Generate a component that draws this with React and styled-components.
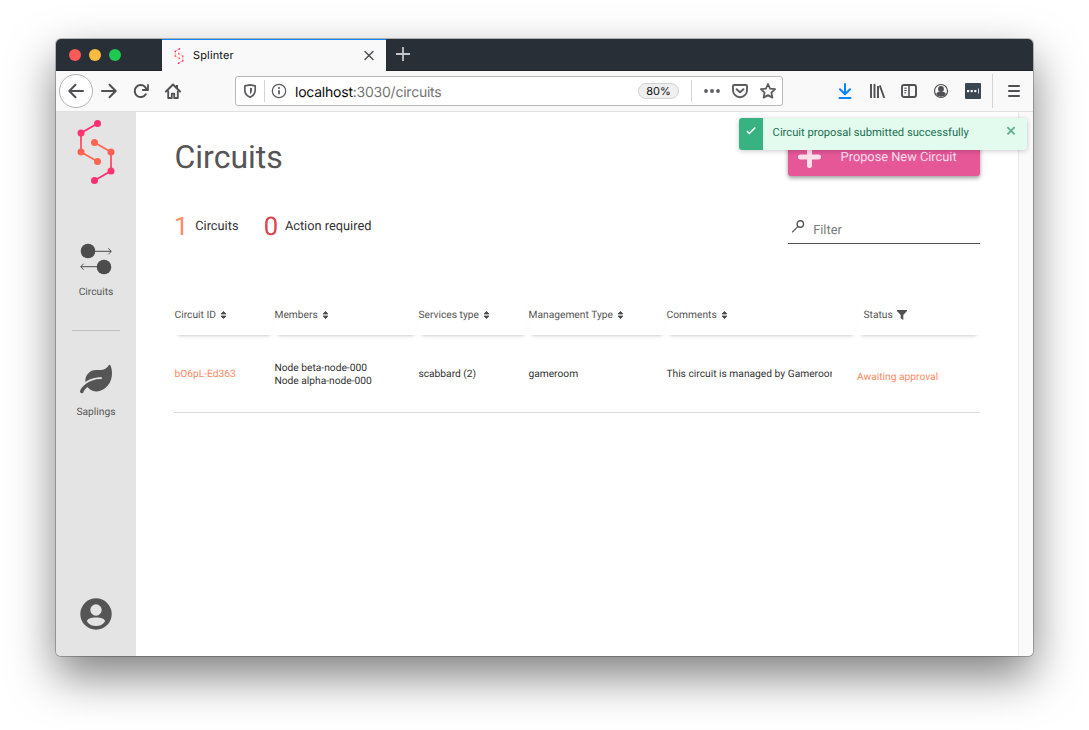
import React from 'react';
import styled, { createGlobalStyle } from 'styled-components';

const Global = createGlobalStyle`
  * { box-sizing: border-box; }
  body { margin: 0; background: #fff; overflow: hidden; text-rendering: geometricPrecision; }
  svg { display: block; flex: none; overflow: visible; }
`;

const Desktop = styled.div`
  width: 1089px;
  height: 730px;
  padding: 39px 56px 74px;
  background: #fff;
  overflow: hidden;
`;

const Window = styled.div`
  display: flex;
  flex-direction: column;
  width: 977px;
  height: 617px;
  border-radius: 5px;
  overflow: hidden;
  background: #fff;
  box-shadow: 0 0 0 1px rgba(0, 0, 0, 0.24), 0 20px 46px rgba(0, 0, 0, 0.5);
  font-family: Roboto, sans-serif;
`;

const TabStrip = styled.div`
  display: flex;
  height: 32px;
  background: #282f37;
  border-bottom: 1px solid #1c2228;
  flex: none;
`;

const Lights = styled.div`
  display: flex;
  gap: 8px;
  width: 106px;
  padding: 10px 0 0 13px;
`;

const Light = styled.span`
  width: 12px;
  height: 12px;
  border-radius: 50%;
  background: ${(p) => p.$color};
`;

const Tab = styled.div`
  display: flex;
  align-items: center;
  width: 224px;
  height: 32px;
  padding: 0 11px 0 12px;
  background: #f9f9fa;
  border-top: 1px solid #0a84ff;
`;

const TabTitle = styled.span`
  flex: 1;
  margin: -1px 0 0 9px;
  font: 400 11px/16px Inter, sans-serif;
  letter-spacing: 0.15px;
  color: #0c0c0d;
`;

const NewTab = styled.div`
  padding: 8px 0 0 10px;
`;

const Toolbar = styled.div`
  display: flex;
  align-items: center;
  height: 41px;
  flex: none;
  padding-left: 3px;
  background: #f9f9fa;
  border-bottom: 1px solid #e0e0e1;
`;

const BackButton = styled.div`
  display: flex;
  align-items: center;
  justify-content: center;
  width: 34px;
  height: 34px;
  border: 1px solid #b4b4b5;
  border-radius: 50%;
  background: #fff;
`;

const NavIcons = styled.div`
  display: flex;
  gap: 16px;
  margin-left: 8px;
  width: 134px;
`;

const UrlBar = styled.div`
  display: flex;
  align-items: center;
  width: 548px;
  height: 30px;
  padding: 0 6px 0 6px;
  border: 1px solid #b9b9ba;
  border-radius: 3px;
  background: #fff;
`;

const Divider = styled.span`
  width: 1px;
  height: ${(p) => p.$height}px;
  margin: 0 ${(p) => p.$right}px 0 ${(p) => p.$left}px;
  background: #d4d4d5;
`;

const Url = styled.span`
  flex: 1;
  margin: 3px 0 0 8px;
  font: 400 14px/20px Inter, sans-serif;
  letter-spacing: -0.23px;
  color: #0c0c0d;
`;

const UrlRest = styled.span`
  color: #737374;
`;

const Zoom = styled.span`
  width: 41px;
  height: 16px;
  border: 1px solid #d2d2d3;
  border-radius: 8px;
  background: #efeff0;
  font: 400 11px/14px Inter, sans-serif;
  color: #0c0c0d;
  text-align: center;
`;

const UrlActions = styled.div`
  display: flex;
  gap: 12px;
`;

const ToolIcons = styled.div`
  display: flex;
  gap: 16px;
  margin-left: 54px;
`;

const Page = styled.div`
  position: relative;
  display: flex;
  flex: 1;
  min-height: 0;
`;

const Sidebar = styled.nav`
  display: flex;
  flex-direction: column;
  align-items: center;
  width: 80px;
  padding: 8px 0 26px;
  background: #e4e4e4;
`;

const NavItem = styled.div`
  display: flex;
  flex-direction: column;
  align-items: center;
  margin-top: ${(p) => p.$top}px;
`;

const NavLabel = styled.span`
  margin-top: 10px;
  font-size: 10.24px;
  line-height: 14px;
  color: #555;
`;

const NavRule = styled.div`
  width: 48px;
  height: 1px;
  margin-top: 31px;
  background: #bfbfbf;
`;

const Spacer = styled.div`
  flex: 1;
`;

const Main = styled.main`
  flex: 1;
  padding: 24px 38px 0 38px;
`;

const Scrollbar = styled.div`
  width: 15px;
  background: #fafafa;
  border-left: 1px solid #e8e8e8;
`;

const TitleRow = styled.div`
  display: flex;
  justify-content: space-between;
  height: 41px;
`;

const Title = styled.h1`
  margin: 0;
  padding-left: 0.5px;
  font-weight: 400;
  font-size: 32px;
  line-height: 42px;
  color: #555;
`;

const ProposeButton = styled.div`
  display: flex;
  align-items: center;
  width: 192px;
  height: 38px;
  margin-top: 2px;
  padding-left: 10px;
  border-radius: 3px;
  background: #e65798;
  box-shadow: 0 2px 4px rgba(0, 0, 0, 0.4);
  color: #fbdfeb;
  font-size: 12.8px;
`;

const ProposeLabel = styled.span`
  margin: 1px 0 0 19.600px;
`;

const StatsRow = styled.div`
  display: flex;
  align-items: flex-end;
  justify-content: space-between;
  height: 67px;
`;

const Stats = styled.div`
  display: flex;
  align-items: center;
  height: 36px;
  padding-top: 2px;
`;

const StatCount = styled.span`
  margin-right: 6.800px;
  font-size: 25.6px;
  line-height: 36px;
  color: ${(p) => p.$color};
`;

const StatLabel = styled.span`
  margin: -1px 25.200px 0 0;
  font-size: 12.8px;
  color: #333;
`;

const Filter = styled.div`
  display: flex;
  width: 192px;
  height: 30px;
  padding: 6px 0 0 4px;
  border-bottom: 1px solid #555;
`;

const FilterText = styled.span`
  margin: 2px 0 0 9.200px;
  font-size: 12.8px;
  line-height: 18px;
  color: #7b7b7b;
`;

const Table = styled.div`
  margin-top: 50px;
`;

const columns = '100px 144px 110px 138px 191px 123px';

const HeadRow = styled.div`
  display: grid;
  grid-template-columns: ${columns};
  height: 41px;
`;

const HeadCell = styled.div`
  display: flex;
  align-items: center;
  gap: 4px;
  padding-left: ${(p) => p.$indent || 0.5}px;
  font-size: 10.24px;
  color: #555;
  box-shadow: 0 4px 4px -4px rgba(0, 0, 0, 0.3);
`;

const BodyRow = styled.div`
  display: grid;
  grid-template-columns: ${columns};
  align-items: center;
  height: 78px;
  border-bottom: 1px solid #dadada;
`;

const Cell = styled.div`
  padding: ${(p) => p.$drop || 0}px 0 0 ${(p) => (p.$drop ? 0 : 0.4)}px;
  font-size: 10.24px;
  line-height: 13px;
  color: ${(p) => p.$color || '#333'};
  white-space: nowrap;
  overflow: hidden;
  width: ${(p) => (p.$width ? `${p.$width}px` : 'auto')};
`;

const Toast = styled.div`
  position: absolute;
  top: 6px;
  right: 6px;
  display: flex;
  align-items: center;
  width: 288px;
  height: 32px;
  padding-right: 11px;
  border-radius: 3px;
  overflow: hidden;
  background: #e3fbef;
  box-shadow: 0 1px 5px rgba(0, 0, 0, 0.22);
  color: #1a7050;
`;

const ToastMark = styled.div`
  display: flex;
  width: 24px;
  height: 32px;
  padding: 8px 0 0 7px;
  background: #38b280;
`;

const ToastText = styled.span`
  flex: 1;
  margin: -4px 0 0 9.600px;
  font-size: 11.2px;
`;

const Icon = ({ size = 16, children, ...rest }) => (
  <svg
    width={size}
    height={size}
    viewBox={`0 0 ${size} ${size}`}
    fill="none"
    stroke="#505054"
    strokeWidth="2"
    strokeLinecap="round"
    strokeLinejoin="round"
    {...rest}
  >
    {children}
  </svg>
);

const Logo = ({ w, h, id }) => (
  <svg width={w} height={h} viewBox="0 0 38 64">
    <defs>
      <linearGradient id={`${id}a`} gradientUnits="userSpaceOnUse" x1="0" y1="10" x2="0" y2="34">
        <stop offset="0" stopColor="#ff2d74" />
        <stop offset="1" stopColor="#ff6651" />
      </linearGradient>
      <linearGradient id={`${id}b`} gradientUnits="userSpaceOnUse" x1="0" y1="30" x2="0" y2="54">
        <stop offset="0" stopColor="#ff6651" />
        <stop offset="1" stopColor="#ff2d74" />
      </linearGradient>
    </defs>
    <g fill="none" strokeWidth="1.8">
      <path d="M20.500 3.500 4 13V32L20.500 41.500" stroke={`url(#${id}a)`} />
      <path d="M17.500 22.500 34 32V51L17.500 60.500" stroke={`url(#${id}b)`} />
    </g>
    <g fill={`url(#${id}a)`}>
      <circle cx="20.500" cy="3.500" r="3.500" />
      <circle cx="4" cy="13" r="3.500" />
      <circle cx="4" cy="32" r="3.500" />
      <circle cx="20.500" cy="41.500" r="3.500" />
    </g>
    <g fill={`url(#${id}b)`}>
      <circle cx="17.500" cy="22.500" r="3.500" />
      <circle cx="34" cy="32" r="3.500" />
      <circle cx="34" cy="51" r="3.500" />
      <circle cx="17.500" cy="60.500" r="3.500" />
    </g>
  </svg>
);

const SortIcon = () => (
  <svg width="7" height="8" viewBox="0 0 7 8" fill="#505050">
    <path d="M3.500.5 5.900 2.900H1.100zM3.500 7.500 1.100 5.100H5.900z" stroke="#505050" strokeLinejoin="round" />
  </svg>
);

const headings = ['Circuit ID', 'Members', 'Services type', 'Management Type', 'Comments'];

export default function App() {
  return (
    <Desktop>
      <Global />
      <Window>
        <TabStrip>
          <Lights>
            <Light $color="#ff5a57" />
            <Light $color="#fdbb40" />
            <Light $color="#1fc94f" />
          </Lights>
          <Tab>
            <Logo w={10} h={16} id="fav" />
            <TabTitle>Splinter</TabTitle>
            <Icon size={12} strokeWidth="1.5">
              <path d="M2 1.500l8 8M10 1.500l-8 8" />
            </Icon>
          </Tab>
          <NewTab>
            <Icon size={14} stroke="#c3c5c7" strokeWidth="1.8" strokeLinecap="butt">
              <path d="M7 0v14M0 7h14" />
            </Icon>
          </NewTab>
        </TabStrip>
        <Toolbar>
          <BackButton>
            <Icon>
              <path d="M15 8H1.500M7.500 1.800 1.300 8l6.200 6.200" />
            </Icon>
          </BackButton>
          <NavIcons>
            <Icon>
              <path d="M1 8h13.500M8.500 1.800 14.700 8l-6.200 6.200" />
            </Icon>
            <Icon>
              <path d="M12.800 11.300A6 6 0 1 1 11.700 3.600L14 6.300" />
              <path d="M15 2V7H9.800" strokeWidth="1.800" />
            </Icon>
            <Icon strokeLinecap="butt">
              <path d="M1 8.500 8 1.500l7 7" strokeLinecap="round" />
              <path d="M3.200 7.500V15h3.600v-4.300h2.400V15h3.600V7.500" strokeWidth="1.800" />
              <path d="M12 2v3" />
            </Icon>
          </NavIcons>
          <UrlBar>
            <Icon stroke="#5c5c61" strokeWidth="1.700">
              <path d="M8 1.800 13.200 2.800V7c0 3.800-1.800 5.800-5.200 7.200C4.600 12.800 2.800 10.800 2.800 7V2.800z" />
              <path d="M8 4.700v6.500c1.400-1 2-2.400 2-4.200V5.100z" fill="#5c5c61" stroke="none" />
            </Icon>
            <Divider $height={22} $left={6} $right={6} />
            <Icon stroke="#5c5c61" strokeWidth="1.200">
              <circle cx="8" cy="8" r="6.700" />
              <path d="M8 7.200v4" strokeWidth="1.800" strokeLinecap="butt" />
              <circle cx="8" cy="5" r="1.050" fill="#5c5c61" stroke="none" />
            </Icon>
            <Url>
              localhost<UrlRest>:3030/circuits</UrlRest>
            </Url>
            <Zoom>80%</Zoom>
            <Divider $height={22} $left={12} $right={12} />
            <UrlActions>
              <Icon stroke="none" fill="#5c5c61">
                <circle cx="2" cy="8" r="1.900" />
                <circle cx="8" cy="8" r="1.900" />
                <circle cx="14" cy="8" r="1.900" />
              </Icon>
              <Icon stroke="#5c5c61" strokeWidth="1.900">
                <path d="M2 2h12c.6 0 1 .4 1 1v4.200a7 7 0 0 1-14 0V3c0-.6.4-1 1-1z" />
                <path d="M4.600 6.200 8 9.300l3.400-3.100" />
              </Icon>
              <Icon stroke="#5c5c61" strokeWidth="1.800">
                <path d="M8 1l2.100 4.600 5 .6-3.700 3.400 1 5L8 12.100l-4.400 2.500 1-5L.9 6.200l5-.6z" />
              </Icon>
            </UrlActions>
          </UrlBar>
          <ToolIcons>
            <Icon stroke="#0a84ff">
              <path d="M8 1v10M3 6.300l5 5 5-5M2.500 15h11" />
            </Icon>
            <Icon strokeLinecap="butt" strokeWidth="1.900">
              <path d="M2 1v14M5.500 1v14M9 3v12M10.800 2.500 15.300 15" />
            </Icon>
            <Icon strokeWidth="1.900">
              <rect x="1" y="2" width="14" height="12" rx="2" />
              <path d="M8 2v12" strokeWidth="1.600" />
              <path d="M3.200 5.200h2.500M3.200 7.500h2.500M3.200 9.800h2" strokeWidth="1" strokeLinecap="butt" />
            </Icon>
            <Icon strokeWidth="1.200">
              <circle cx="8" cy="8" r="6.500" />
              <circle cx="8" cy="6" r="2.900" fill="#505054" stroke="none" />
              <path d="M3.200 11C4 9.200 5.500 8.800 6 8.800h4c.5 0 2 .4 2.800 2.200A5.600 5.600 0 0 1 3.200 11z" fill="#505054" stroke="none" />
            </Icon>
            <Icon stroke="none">
              <rect width="16" height="16" rx="1" fill="#3a4652" />
              <g fill="#fff">
                <rect x="2" y="7" width="2.200" height="2.200" rx=".6" />
                <rect x="5.600" y="7" width="2.200" height="2.200" rx=".6" />
                <rect x="9.200" y="7" width="2.200" height="2.200" rx=".6" />
                <rect x="13" y="5.500" width=".8" height="5" />
              </g>
            </Icon>
          </ToolIcons>
          <Divider $height={34} $left={11} $right={13} />
          <Icon>
            <path d="M3 3h10M3 8h10M3 13h10" />
          </Icon>
        </Toolbar>
        <Page>
          <Sidebar>
            <Logo w={38} h={64} id="brand" />
            <NavItem $top={59}>
              <svg width="32" height="32" viewBox="0 0 32 32" fill="none" stroke="#4c4c4c">
                <circle cx="8" cy="8" r="7.300" fill="#4c4c4c" stroke="none" />
                <circle cx="24" cy="24" r="7.300" fill="#4c4c4c" stroke="none" />
                <path d="M14 8.300h17M28.300 5.300l3 3-3 3M18 23.700H1M3.700 20.700l-3 3 3 3" />
              </svg>
              <NavLabel>Circuits</NavLabel>
            </NavItem>
            <NavRule />
            <NavItem $top={32}>
              <svg width="32" height="32" viewBox="0 0 576 512" fill="#555">
                <path d="M546.200 9.700c-5.600-12.500-21.600-13-28.300-1.200C486.900 62.400 431.400 96 368 96h-80C182 96 96 182 96 288c0 7 .8 13.700 1.500 20.500C161.300 262.800 253.400 224 384 224c8.800 0 16 7.200 16 16s-7.200 16-16 16C132.600 256 26 410.100 2.400 468c-6.600 16.300 1.200 34.900 17.500 41.600 16.400 6.800 35-1.100 41.800-17.300 1.500-3.600 20.900-47.900 71.900-90.600 32.400 43.900 94 85.800 174.900 77.200C465.500 467.500 576 326.700 576 154.300c0-50.200-10.800-102.200-29.800-144.600z" />
              </svg>
              <NavLabel>Saplings</NavLabel>
            </NavItem>
            <Spacer />
            <svg width="32" height="32" viewBox="0 0 32 32">
              <circle cx="16" cy="16" r="15.700" fill="#555" />
              <circle cx="16" cy="12" r="5.700" fill="#e4e4e4" />
              <path d="M7 23.500c0-2.600 4-3.900 9-3.900s9 1.300 9 3.900c-2 3-5.200 4.600-9 4.600s-7-1.600-9-4.600z" fill="#e4e4e4" />
            </svg>
          </Sidebar>
          <Main>
            <TitleRow>
              <Title>Circuits</Title>
              <ProposeButton>
                <svg width="23" height="23" viewBox="0 0 23 23" stroke="#fbdfeb" strokeWidth="5" strokeLinecap="round">
                  <path d="M11.500 2.500v17M2.500 11h18" />
                </svg>
                <ProposeLabel>Propose New Circuit</ProposeLabel>
              </ProposeButton>
            </TitleRow>
            <StatsRow>
              <Stats>
                <StatCount $color="#ff8a65">1</StatCount>
                <StatLabel>Circuits</StatLabel>
                <StatCount $color="#d9454c">0</StatCount>
                <StatLabel>Action required</StatLabel>
              </Stats>
              <Filter>
                <svg width="12" height="13" viewBox="0 0 12 13" fill="none" stroke="#555" strokeLinecap="round">
                  <circle cx="8.300" cy="4" r="3.200" strokeWidth="1.400" />
                  <path d="M6 6.400.5 12" strokeWidth="1.100" />
                </svg>
                <FilterText>Filter</FilterText>
              </Filter>
            </StatsRow>
            <Table>
              <HeadRow>
                {headings.map((h) => (
                  <HeadCell key={h}>
                    {h}
                    <SortIcon />
                  </HeadCell>
                ))}
                <HeadCell $indent={6.500}>
                  Status
                  <svg width="10" height="10" viewBox="0 0 10 10" fill="#505050">
                    <path d="M0 0h10v1L6.300 5v5L3.700 8.200V5L0 1z" />
                  </svg>
                </HeadCell>
              </HeadRow>
              <BodyRow>
                <Cell $color="#ff8a65">bO6pL-Ed363</Cell>
                <Cell>
                  Node beta-node-000
                  <br />
                  Node alpha-node-000
                </Cell>
                <Cell>scabbard (2)</Cell>
                <Cell>gameroom</Cell>
                <Cell $width={165.5}>This circuit is managed by Gameroom</Cell>
                <Cell $color="#ff8a65" $drop={6}>Awaiting approval</Cell>
              </BodyRow>
            </Table>
          </Main>
          <Scrollbar />
          <Toast>
            <ToastMark>
              <svg width="10" height="9" viewBox="0 0 10 9" fill="none" stroke="#fff" strokeWidth="1.600">
                <path d="M.8 5 3.400 7.500 9.300 1.500" />
              </svg>
            </ToastMark>
            <ToastText>Circuit proposal submitted successfully</ToastText>
            <svg width="10" height="16" viewBox="0 0 10 16" stroke="#5fae8d" strokeWidth="1.800">
              <path d="M1.400 1.200l7.200 7.200M8.600 1.200l-7.200 7.200" />
            </svg>
          </Toast>
        </Page>
      </Window>
    </Desktop>
  );
}
